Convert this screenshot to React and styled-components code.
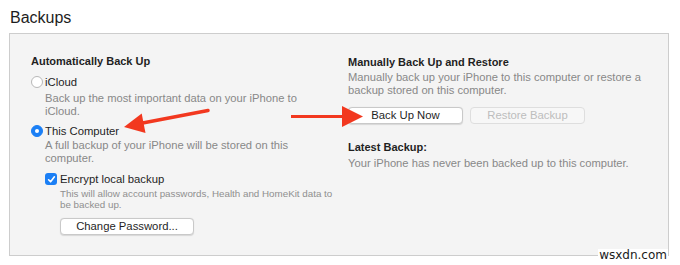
import React from "react";
import styled, { createGlobalStyle } from "styled-components";

const GlobalStyle = createGlobalStyle`
  html, body {
    margin: 0;
    padding: 0;
    background: #ffffff;
  }
  body {
    font-family: "Liberation Sans", Arial, sans-serif;
    -webkit-font-smoothing: antialiased;
  }
`;

const Page = styled.div`
  position: relative;
  width: 680px;
  height: 265px;
  padding: 0 11px 0 9px;
  box-sizing: border-box;
  overflow: hidden;
`;

const Title = styled.h2`
  margin: 0;
  padding: 8px 0 0 1px;
  height: 33px;
  box-sizing: border-box;
  font-size: 16px;
  font-weight: 400;
  line-height: 20px;
  color: #1d1d1d;
`;

const Panel = styled.div`
  height: 223px;
  box-sizing: border-box;
  border: 1px solid #cdcdcd;
  background: #f4f4f4;
  padding: 20px 0 0 21px;
  display: grid;
  grid-template-columns: 317px 1fr;
`;

const Column = styled.div`
  display: flex;
  flex-direction: column;
`;

const Heading = styled.div`
  font-size: 11px;
  font-weight: 700;
  line-height: 14px;
  color: #1f1f1f;
  margin-top: ${(p) => p.$top || 0}px;
`;

const Option = styled.label`
  display: flex;
  align-items: center;
  gap: 2px;
  height: 14px;
  margin-top: ${(p) => p.$top || 0}px;
  margin-left: ${(p) => p.$indent || 0}px;
  font-size: 11.3px;
  color: #1f1f1f;
`;

const Radio = styled.span`
  width: 12px;
  height: 12px;
  border-radius: 50%;
  box-sizing: border-box;
  flex-shrink: 0;
  display: flex;
  align-items: center;
  justify-content: center;
  background: ${(p) => (p.$on ? "#1b7ff5" : "#ffffff")};
  border: 1px solid ${(p) => (p.$on ? "#1b7ff5" : "#b8b8b8")};
  &::after {
    content: "";
    width: 4px;
    height: 4px;
    border-radius: 50%;
    background: #ffffff;
    display: ${(p) => (p.$on ? "block" : "none")};
  }
`;

const Check = styled.span`
  width: 12px;
  height: 12px;
  border-radius: 3px;
  background: #1b7ff5;
  flex-shrink: 0;
  display: flex;
  align-items: center;
  justify-content: center;
  margin-right: 1px;
`;

const Desc = styled.div`
  font-size: ${(p) => (p.$small ? 9.8 : 11.2)}px;
  line-height: ${(p) => (p.$small ? 11 : 13)}px;
  color: ${(p) => (p.$small ? "#8f8f8f" : "#888888")};
  white-space: nowrap;
  margin-left: ${(p) => p.$indent || 0}px;
  margin-top: ${(p) => p.$top || 0}px;
`;

const ButtonRow = styled.div`
  display: flex;
  gap: 7px;
  margin-top: ${(p) => p.$top || 0}px;
  margin-left: ${(p) => p.$indent || 0}px;
`;

const Button = styled.button`
  width: ${(p) => p.$w}px;
  height: 17px;
  padding: 0;
  box-sizing: border-box;
  border-radius: 4px;
  font-family: "Liberation Sans", Arial, sans-serif;
  font-size: 11.3px;
  line-height: 15px;
  color: ${(p) => (p.disabled ? "#bdbdbd" : "#1f1f1f")};
  background: ${(p) => (p.disabled ? "#f7f7f7" : "#ffffff")};
  border: 1px solid ${(p) => (p.disabled ? "#dedede" : "#c9c9c9")};
  box-shadow: ${(p) => (p.disabled ? "none" : "0 0.5px 1px rgba(0,0,0,0.12)")};
`;

const Overlay = styled.svg`
  position: absolute;
  left: 0;
  top: 0;
  pointer-events: none;
`;

const Watermark = styled.div`
  position: absolute;
  right: 12px;
  bottom: 3px;
  padding: 0 1px;
  background: #ffffff;
  font-family: "DejaVu Sans", sans-serif;
  font-size: 12px;
  line-height: 13px;
  color: #1a1a1a;
`;

const CheckMark = () => (
  <svg width="9" height="9" viewBox="0 0 9 9">
    <path d="M1.6 4.8 L3.6 6.8 L7.4 1.8" fill="none" stroke="#fff" strokeWidth="1.6" strokeLinecap="round" strokeLinejoin="round" />
  </svg>
);

const App = () => {
  return (
    <>
      <GlobalStyle />
      <Page>
        <Title>Backups</Title>
        <Panel>
          <Column>
            <Heading>Automatically Back Up</Heading>
            <Option $top={7}>
              <Radio />
              iCloud
            </Option>
            <Desc $indent={14} $top={3}>
              Back up the most important data on your iPhone to
              <br />
              iCloud.
            </Desc>
            <Option $top={6}>
              <Radio $on />
              This Computer
            </Option>
            <Desc $indent={14} $top={1}>
              A full backup of your iPhone will be stored on this
              <br />
              computer.
            </Desc>
            <Option $top={7} $indent={14}>
              <Check>
                <CheckMark />
              </Check>
              Encrypt local backup
            </Option>
            <Desc $small $indent={29} $top={2}>
              This will allow account passwords, Health and HomeKit data to
              <br />
              be backed up.
            </Desc>
            <ButtonRow $top={8} $indent={29}>
              <Button $w={134}>Change Password...</Button>
            </ButtonRow>
          </Column>
          <Column>
            <Heading $top={1}>Manually Back Up and Restore</Heading>
            <Desc $top={2}>
              Manually back up your iPhone to this computer or restore a
              <br />
              backup stored on this computer.
            </Desc>
            <ButtonRow $top={10}>
              <Button $w={115}>Back Up Now</Button>
              <Button $w={115} disabled>
                Restore Backup
              </Button>
            </ButtonRow>
            <Heading $top={16}>Latest Backup:</Heading>
            <Desc $top={3}>Your iPhone has never been backed up to this computer.</Desc>
          </Column>
        </Panel>
        <Overlay width="680" height="265" viewBox="0 0 680 265">
          <line x1="208" y1="110.5" x2="140" y2="123.5" stroke="#f2381f" strokeWidth="3.5" strokeLinecap="round" />
          <polygon points="124,127 145.5,133 141.7,113.5" fill="#f2381f" />
          <line x1="291" y1="116.5" x2="345" y2="116.5" stroke="#f2381f" strokeWidth="3.2" />
          <polygon points="342,106 363,116.5 342,127" fill="#f2381f" />
        </Overlay>
        <Watermark>wsxdn.com</Watermark>
      </Page>
    </>
  );
};

export default App;
